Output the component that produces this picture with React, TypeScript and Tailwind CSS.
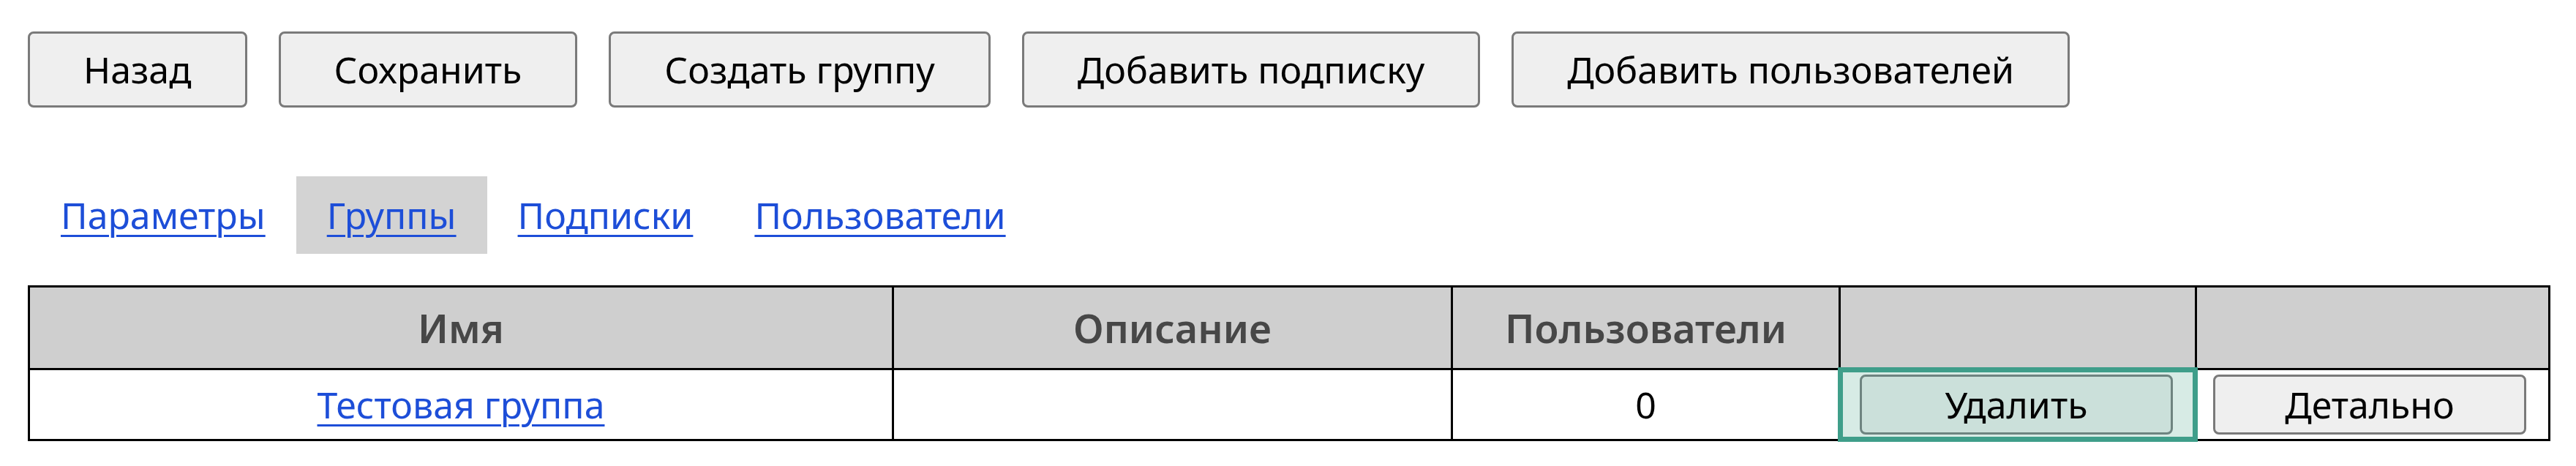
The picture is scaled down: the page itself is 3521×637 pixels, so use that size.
import React from "react";

const actions = ["Назад", "Сохранить", "Создать группу", "Добавить подписку", "Добавить пользователей"];
const tabs = ["Параметры", "Группы", "Подписки", "Пользователи"];

export default function App() {
  return (
    <div className="min-h-screen bg-white px-[38px] pt-[43px] font-['Noto_Sans',sans-serif] text-black">
      <div className="flex gap-[43px]">
        {actions.map((a) => (
          <button
            key={a}
            type="button"
            className="h-[104px] px-[73px] rounded-[8px] border-[3px] border-[#7a7a7a] bg-[#efefef] text-[50px] leading-none text-black"
          >
            {a}
          </button>
        ))}
      </div>

      <div className="mt-[94px] flex pl-[3px]">
        {tabs.map((t) => (
          <div
            key={t}
            className={"h-[106px] px-[42px] flex items-center " + (t === "Группы" ? "bg-[#d3d3d3]" : "")}
          >
            <a href="#" className="text-[50px] leading-none text-[#1d4ed8] underline underline-offset-[8px] decoration-[3px]">
              {t}
            </a>
          </div>
        ))}
      </div>

      <table className="mt-[43px] w-[3448px] border-collapse border-[3px] border-black table-fixed">
        <thead>
          <tr className="h-[113px] bg-[#cfcfcf]">
            <th className="w-[1181px] border-[3px] border-black text-[54px] font-semibold text-[#474747]">Имя</th>
            <th className="w-[764px] border-[3px] border-black text-[54px] font-semibold text-[#474747]">Описание</th>
            <th className="w-[530px] border-[3px] border-black text-[54px] font-semibold text-[#474747]">Пользователи</th>
            <th className="w-[487px] border-[3px] border-black"></th>
            <th className="border-[3px] border-black"></th>
          </tr>
        </thead>
        <tbody>
          <tr className="h-[97px]">
            <td className="border-[3px] border-black text-center">
              <a href="#" className="text-[50px] leading-none text-[#1d4ed8] underline underline-offset-[8px] decoration-[3px]">
                Тестовая группа
              </a>
            </td>
            <td className="border-[3px] border-black"></td>
            <td className="border-[3px] border-black text-center text-[50px]">0</td>
            <td className="relative border-[3px] border-black pl-[26px] pr-[30px]">
              <div className="absolute -inset-[4px] border-[7px] border-[#3f9e8a] bg-[#d7ebe5]"></div>
              <button
                type="button"
                className="relative w-full h-[82px] rounded-[8px] border-[3px] border-[#6e8480] bg-[#cbe0da] text-[50px] leading-none text-black"
              >
                Удалить
              </button>
            </td>
            <td className="border-[3px] border-black pl-[22px] pr-[30px]">
              <button
                type="button"
                className="w-full h-[82px] rounded-[8px] border-[3px] border-[#7a7a7a] bg-[#efefef] text-[50px] leading-none text-black"
              >
                Детально
              </button>
            </td>
          </tr>
        </tbody>
      </table>
    </div>
  );
}
